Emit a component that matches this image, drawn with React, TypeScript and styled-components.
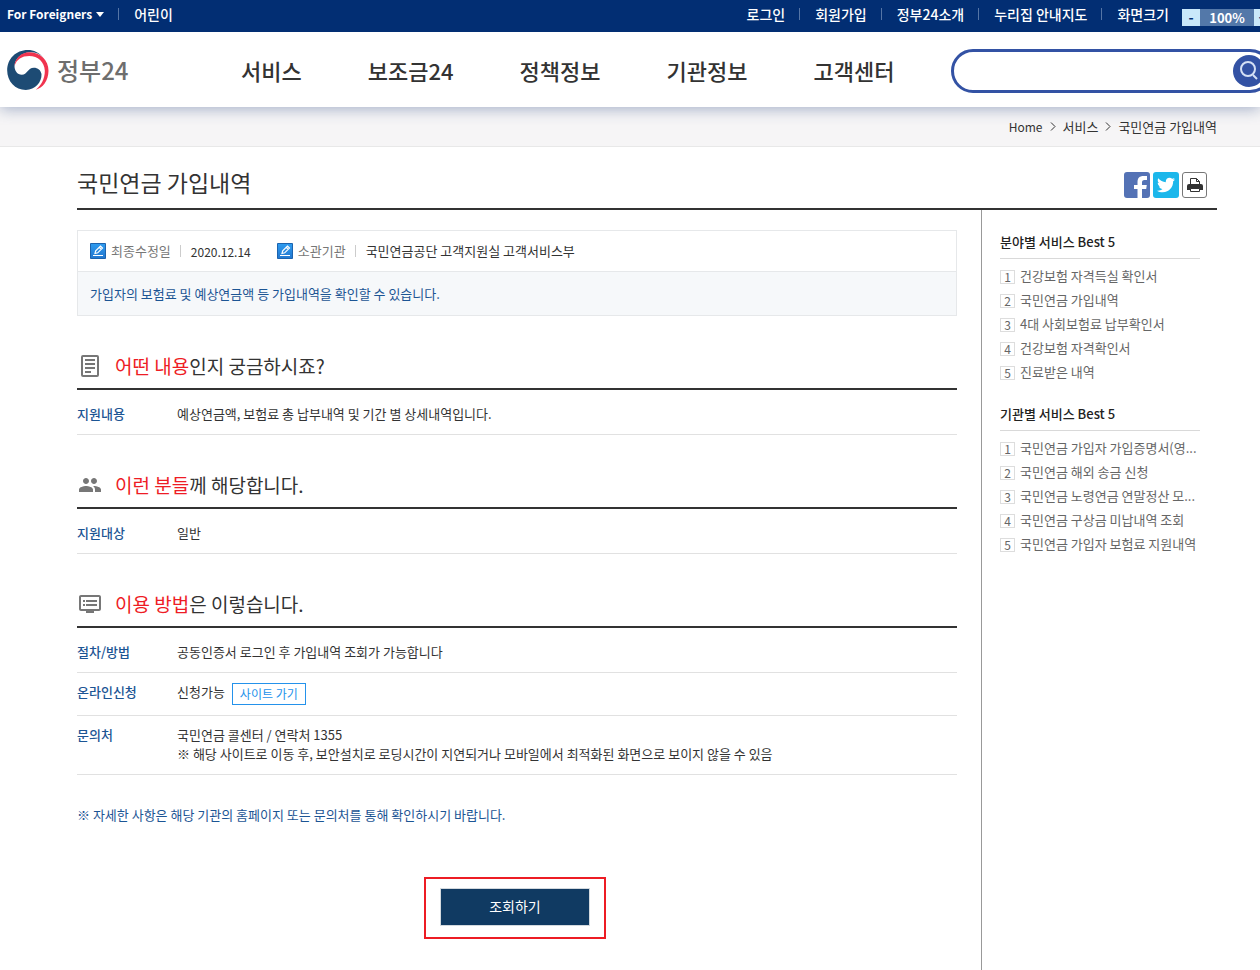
import React from "react";
import styled, { createGlobalStyle } from "styled-components";
import { MdPeople, MdDvr } from "react-icons/md";
import { FaTwitter } from "react-icons/fa";

const GlobalStyle = createGlobalStyle`
  * { box-sizing: border-box; }
  body {
    margin: 0;
    background: #fff;
    color: #333;
    font: 13px/19px "Noto Sans CJK KR", "Noto Sans", sans-serif;
  }
  h1, h2, h3, p, ul, ol, dl, dd { margin: 0; padding: 0; }
  ul, ol { list-style: none; }
  a { color: inherit; text-decoration: none; }
  button, input { font: inherit; }
`;

const Page = styled.div`
  min-height: 100vh;
  display: flex;
  flex-direction: column;
  overflow-x: clip;
`;

const TopBar = styled.div`
  display: flex;
  justify-content: space-between;
  height: 32px;
  padding-left: 7px;
  background: #022e73;
  color: #fff;
  font-size: 14px;
  font-weight: 500;
  line-height: 28px;
  white-space: nowrap;
`;

const TopLinks = styled.ul`
  display: flex;
  margin-right: -12px;
`;

const TopItem = styled.li`
  display: flex;
  align-items: center;
  height: 28px;
  & + &::before {
    content: "";
    width: 1px;
    height: 12px;
    margin: 0 15px 0 14px;
    background: #5575a6;
  }
`;

const Foreigners = styled.button`
  display: flex;
  align-items: center;
  gap: 4px;
  padding: 0;
  border: 0;
  background: none;
  color: inherit;
  font-size: 12px;
  font-weight: 700;
`;

const ZoomControl = styled.div`
  display: flex;
  height: 17px;
  margin: 9px 0 0 13px;
  font-weight: 700;
  line-height: 17px;
`;

const ZoomButton = styled.button`
  width: 18px;
  padding: 0;
  border: 0;
  background: #c9e8fa;
  color: #022e73;
  line-height: 15px;
`;

const ZoomValue = styled.span`
  width: 54px;
  background: #5378a9;
  font-size: 13px;
  text-align: center;
`;

const Header = styled.header`
  display: flex;
  align-items: center;
  height: 75px;
  padding-left: 7px;
  background: #fff;
  box-shadow: 0 2px 14px rgba(40, 70, 130, 0.4);
  clip-path: inset(0 0 -18px 0);
  white-space: nowrap;
`;

const Logo = styled.a`
  display: flex;
  align-items: center;
  gap: 8px;
  width: 234px;
  flex: none;
  color: #6e6e6e;
  font-size: 24px;
  font-weight: 500;
  line-height: 40px;
`;

const MainNav = styled.nav`
  display: flex;
  gap: 66px;
  margin-right: 57px;
  font-size: 22px;
  font-weight: 500;
  line-height: 32px;
`;

const Search = styled.form`
  display: flex;
  flex: 1;
  align-items: center;
  height: 44px;
  margin: 2px -12px 0 0;
  padding-right: 4px;
  border: 3px solid #3352a4;
  border-radius: 22px;
`;

const SearchInput = styled.input`
  flex: 1;
  min-width: 0;
  margin-left: 16px;
  border: 0;
  outline: 0;
  background: none;
`;

const SearchButton = styled.button`
  display: grid;
  place-items: center;
  width: 32px;
  height: 32px;
  padding: 0;
  border: 0;
  border-radius: 50%;
  background: #3352a4;
`;

const Breadcrumb = styled.nav`
  display: flex;
  align-items: center;
  justify-content: flex-end;
  gap: 7px;
  height: 40px;
  padding: 0 43px 1px 0;
  border-bottom: 1px solid #e8e8e8;
  background: #f6f5f6;
`;

const Home = styled.a`
  font-size: 12px;
`;

const Content = styled.div`
  display: flex;
  flex: 1;
  flex-direction: column;
  padding: 0 43px 0 77px;
`;

const TitleBar = styled.div`
  display: flex;
  align-items: center;
  justify-content: space-between;
  height: 63px;
  padding: 8px 10px 0 0;
  border-bottom: 2px solid #333;
`;

const Title = styled.h1`
  font-size: 23px;
  font-weight: 400;
  line-height: 34px;
`;

const Share = styled.div`
  display: flex;
  gap: 3px;
  padding-top: 6px;
`;

const ShareButton = styled.button<{ $bg: string; $outlined?: boolean }>`
  display: grid;
  place-items: center;
  width: ${(p) => (p.$outlined ? "25px" : "26px")};
  height: 26px;
  padding: 0;
  overflow: hidden;
  border: ${(p) => (p.$outlined ? "1px solid #777" : "0")};
  border-radius: 3px;
  background: ${(p) => p.$bg};
  color: #fff;
`;

const Columns = styled.div`
  display: flex;
  flex: 1;
  gap: 24px;
`;

const Main = styled.main`
  flex: 1;
  min-width: 0;
  padding: 20px 0 31px;
`;

const Summary = styled.div`
  border: 1px solid #e6e8ea;
`;

const SummaryMeta = styled.div`
  display: flex;
  align-items: center;
  height: 40px;
  padding-left: 12px;
`;

const MetaLabel = styled.span`
  display: flex;
  align-items: center;
  gap: 5px;
  color: #777;
  &::after {
    content: "";
    width: 1px;
    height: 12px;
    margin: 0 10px 0 4px;
    background: #ccc;
  }
`;

const MetaText = styled.span`
  padding-bottom: 2px;
`;

const MetaDate = styled.span`
  width: 86px;
  font-size: 12px;
`;

const SummaryText = styled.p`
  padding: 12px;
  border-top: 1px solid #e6e8ea;
  background: #f6f8fa;
  color: #1c5594;
`;

const SectionTitle = styled.h2`
  display: flex;
  align-items: center;
  gap: 12px;
  height: 74px;
  padding-top: 28px;
  border-bottom: 2px solid #333;
  font-size: 19px;
  font-weight: 400;
  line-height: 28px;
`;

const SectionIcon = styled.span`
  display: grid;
  place-items: center;
  width: 26px;
  color: #777;
`;

const Accent = styled.em`
  color: #ee1c25;
  font-style: normal;
`;

const Details = styled.dl`
  padding-top: 5px;
`;

const DetailRow = styled.div`
  display: flex;
  padding: 9px 0 11px;
  border-bottom: 1px solid #e1e1e1;
`;

const Term = styled.dt`
  width: 100px;
  flex: none;
  color: #1c5594;
  font-weight: 500;
`;

const Desc = styled.dd`
  display: flex;
  flex-wrap: wrap;
  gap: 0 7px;
`;

const Line = styled.p`
  width: 100%;
`;

const SiteLink = styled.a`
  height: 22px;
  margin: 1px 0 -1px;
  padding: 0 7px;
  border: 1px solid #2492eb;
  color: #2492eb;
  font-size: 12px;
  line-height: 20px;
`;

const Notice = styled.p`
  padding: 30px 0 53px;
  color: #1c5594;
`;

const SubmitArea = styled.div`
  padding-right: 4px;
`;

const Highlight = styled.div`
  width: 182px;
  margin: 0 auto;
  padding: 9px 14px 11px;
  border: 2px solid #ed1c24;
`;

const SubmitButton = styled.button`
  display: block;
  width: 100%;
  height: 38px;
  padding: 0 0 2px;
  border: 1px solid #d3d9de;
  background: #103a62;
  color: #fff;
  font-size: 14px;
`;

const Aside = styled.aside`
  width: 236px;
  flex: none;
  padding: 22px 17px 0 18px;
  border-left: 1px solid #999;
`;

const BestTitle = styled.h3`
  padding-bottom: 6px;
  border-bottom: 1px solid #d9d9d9;
  color: #222;
  font-size: 13px;
  font-weight: 500;
  line-height: 20px;
`;

const BestList = styled.ol`
  padding: 6px 0 19px;
  color: #666;
`;

const BestItem = styled.li`
  display: flex;
  align-items: center;
  gap: 5px;
  height: 24px;
`;

const Rank = styled.span`
  width: 15px;
  height: 14px;
  flex: none;
  border: 1px solid #ddd;
  font-size: 12px;
  line-height: 12px;
  text-align: center;
`;

const BestLink = styled.a`
  padding-bottom: 3px;
  white-space: nowrap;
`;

const EmblemIcon = () => (
  <svg width="42" height="40" viewBox="0 0 125 120" aria-hidden="true">
    <path fill="#1d4b74" d="M108 22C96 8 80 0 62 0 26 0 0 27 0 61c0 34 24 59 56 59 28-1 48-22 47-48-2-12-11-19-23-19-18 0-20 21-36 21-14 0-22-12-22-26C24 26 42 9 66 7c18-1 32 5 42 15Z" />
    <path fill="#f0344f" d="M22 48C24 24 42 8 66 7c34-1 58 25 58 55 0 30-18 52-38 57 16-13 27-33 27-57-1-26-21-44-47-44-22 0-38 10-44 30Z" />
  </svg>
);

const CaretIcon = () => (
  <svg width="8" height="5" viewBox="0 0 8 5" aria-hidden="true">
    <path fill="currentColor" d="M0 0h8L4 5Z" />
  </svg>
);

const SearchIcon = () => (
  <svg width="18" height="20" viewBox="0 0 18 20" fill="none" stroke="#d5e0f5" strokeWidth="2" aria-hidden="true">
    <circle cx="8" cy="8" r="7" />
    <path d="m13 14 4 4" />
  </svg>
);

const ChevronIcon = () => (
  <svg width="6" height="9" viewBox="0 0 6 9" fill="none" stroke="#333" aria-hidden="true">
    <path d="m1 .5 4 4-4 4" />
  </svg>
);

const FacebookIcon = () => (
  <svg width="26" height="26" viewBox="0 0 26 26" aria-hidden="true">
    <path fill="currentColor" d="M13.500 26v-9H10v-4h3.500v-3c0-4 2-6 6-6H23v4h-2.500c-2 0-2.500 1-2.500 2.500V13h4.800l-.6 4H18v9Z" />
  </svg>
);

const PrintIcon = () => (
  <svg width="16" height="16" viewBox="0 0 16 16" aria-hidden="true">
    <path fill="#fff" stroke="#333" d="M3.500 8V1.500h6l3 3V8" />
    <path fill="none" stroke="#333" d="M9.500 1.500v3h3" />
    <path fill="#333" d="M2 7h12a2 2 0 0 1 2 2v4H0V9a2 2 0 0 1 2-2Z" />
    <path fill="#fff" stroke="#333" d="M3.500 11.500h9v3h-9z" />
  </svg>
);

const PencilIcon = () => (
  <svg width="16" height="16" viewBox="0 0 16 16" aria-hidden="true">
    <defs>
      <linearGradient id="pencil" x1="0" y1="0" x2="0" y2="1">
        <stop offset="0" stopColor="#2e9cf0" />
        <stop offset="1" stopColor="#2277cf" />
      </linearGradient>
    </defs>
    <path fill="url(#pencil)" stroke="#1c63ae" d="M.5.5h15v15H.5z" />
    <path fill="none" stroke="#fff" strokeWidth="1.200" d="m5 10.500.7-2.700L10.500 3l2 2-4.800 4.800ZM9.300 4.200l2 2M3 12.500h10" />
  </svg>
);

const DocumentIcon = () => (
  <svg width="18" height="22" viewBox="0 0 18 22" fill="none" stroke="currentColor" strokeWidth="2" aria-hidden="true">
    <rect x="1" y="1" width="16" height="20" rx="1" />
    <path d="M4 5h10M4 9h10M4 13h10M4 17h6" />
  </svg>
);

const topLinks = ["로그인", "회원가입", "정부24소개", "누리집 안내지도"];
const menus = ["서비스", "보조금24", "정책정보", "기관정보", "고객센터"];

const bestServices = [
  {
    title: "분야별 서비스 Best 5",
    items: ["건강보험 자격득실 확인서", "국민연금 가입내역", "4대 사회보험료 납부확인서", "건강보험 자격확인서", "진료받은 내역"],
  },
  {
    title: "기관별 서비스 Best 5",
    items: [
      "국민연금 가입자 가입증명서(영...",
      "국민연금 해외 송금 신청",
      "국민연금 노령연금 연말정산 모...",
      "국민연금 구상금 미납내역 조회",
      "국민연금 가입자 보험료 지원내역",
    ],
  },
];

interface SectionProps {
  icon: React.ReactNode;
  accent: string;
  rest: string;
  rows: { term: string; desc: React.ReactNode }[];
}

const Section = ({ icon, accent, rest, rows }: SectionProps) => (
  <section>
    <SectionTitle>
      <SectionIcon>{icon}</SectionIcon>
      <span>
        <Accent>{accent}</Accent>
        {rest}
      </span>
    </SectionTitle>
    <Details>
      {rows.map((row) => (
        <DetailRow key={row.term}>
          <Term>{row.term}</Term>
          <Desc>{row.desc}</Desc>
        </DetailRow>
      ))}
    </Details>
  </section>
);

export default function App() {
  return (
    <Page>
      <GlobalStyle />
      <TopBar>
        <TopLinks>
          <TopItem>
            <Foreigners type="button">
              For Foreigners <CaretIcon />
            </Foreigners>
          </TopItem>
          <TopItem>
            <a href="#kids">어린이</a>
          </TopItem>
        </TopLinks>
        <TopLinks>
          {topLinks.map((label) => (
            <TopItem key={label}>
              <a href="#top">{label}</a>
            </TopItem>
          ))}
          <TopItem>화면크기</TopItem>
          <li>
            <ZoomControl>
              <ZoomButton type="button" aria-label="축소">-</ZoomButton>
              <ZoomValue>100%</ZoomValue>
              <ZoomButton type="button" aria-label="확대">+</ZoomButton>
            </ZoomControl>
          </li>
        </TopLinks>
      </TopBar>

      <Header>
        <Logo href="#home">
          <EmblemIcon />
          정부24
        </Logo>
        <MainNav>
          {menus.map((menu) => (
            <a key={menu} href="#menu">{menu}</a>
          ))}
        </MainNav>
        <Search role="search">
          <SearchInput type="text" aria-label="검색어" />
          <SearchButton type="submit" aria-label="검색">
            <SearchIcon />
          </SearchButton>
        </Search>
      </Header>

      <Breadcrumb>
        <Home href="#home">Home</Home>
        <ChevronIcon />
        <a href="#service">서비스</a>
        <ChevronIcon />
        <span>국민연금 가입내역</span>
      </Breadcrumb>

      <Content>
        <TitleBar>
          <Title>국민연금 가입내역</Title>
          <Share>
            <ShareButton type="button" aria-label="페이스북 공유" $bg="#5472b5">
              <FacebookIcon />
            </ShareButton>
            <ShareButton type="button" aria-label="트위터 공유" $bg="#1cb7eb">
              <FaTwitter size={18} />
            </ShareButton>
            <ShareButton type="button" aria-label="인쇄" $bg="#fff" $outlined>
              <PrintIcon />
            </ShareButton>
          </Share>
        </TitleBar>

        <Columns>
          <Main>
            <Summary>
              <SummaryMeta>
                <MetaLabel>
                  <PencilIcon />
                  <MetaText>최종수정일</MetaText>
                </MetaLabel>
                <MetaDate>2020.12.14</MetaDate>
                <MetaLabel>
                  <PencilIcon />
                  <MetaText>소관기관</MetaText>
                </MetaLabel>
                <MetaText>국민연금공단 고객지원실 고객서비스부</MetaText>
              </SummaryMeta>
              <SummaryText>가입자의 보험료 및 예상연금액 등 가입내역을 확인할 수 있습니다.</SummaryText>
            </Summary>

            <Section
              icon={<DocumentIcon />}
              accent="어떤 내용"
              rest="인지 궁금하시죠?"
              rows={[{ term: "지원내용", desc: "예상연금액, 보험료 총 납부내역 및 기간 별 상세내역입니다." }]}
            />
            <Section
              icon={<MdPeople size={24} />}
              accent="이런 분들"
              rest="께 해당합니다."
              rows={[{ term: "지원대상", desc: "일반" }]}
            />
            <Section
              icon={<MdDvr size={24} />}
              accent="이용 방법"
              rest="은 이렇습니다."
              rows={[
                { term: "절차/방법", desc: "공동인증서 로그인 후 가입내역 조회가 가능합니다" },
                {
                  term: "온라인신청",
                  desc: (
                    <>
                      <span>신청가능</span>
                      <SiteLink href="#site">사이트 가기</SiteLink>
                    </>
                  ),
                },
                {
                  term: "문의처",
                  desc: (
                    <>
                      <Line>국민연금 콜센터 / 연락처 1355</Line>
                      <Line>※ 해당 사이트로 이동 후, 보안설치로 로딩시간이 지연되거나 모바일에서 최적화된 화면으로 보이지 않을 수 있음</Line>
                    </>
                  ),
                },
              ]}
            />

            <Notice>※ 자세한 사항은 해당 기관의 홈페이지 또는 문의처를 통해 확인하시기 바랍니다.</Notice>
            <SubmitArea>
              <Highlight>
                <SubmitButton type="button">조회하기</SubmitButton>
              </Highlight>
            </SubmitArea>
          </Main>

          <Aside>
            {bestServices.map((group) => (
              <section key={group.title}>
                <BestTitle>{group.title}</BestTitle>
                <BestList>
                  {group.items.map((item, i) => (
                    <BestItem key={item}>
                      <Rank>{i + 1}</Rank>
                      <BestLink href="#best">{item}</BestLink>
                    </BestItem>
                  ))}
                </BestList>
              </section>
            ))}
          </Aside>
        </Columns>
      </Content>
    </Page>
  );
}
